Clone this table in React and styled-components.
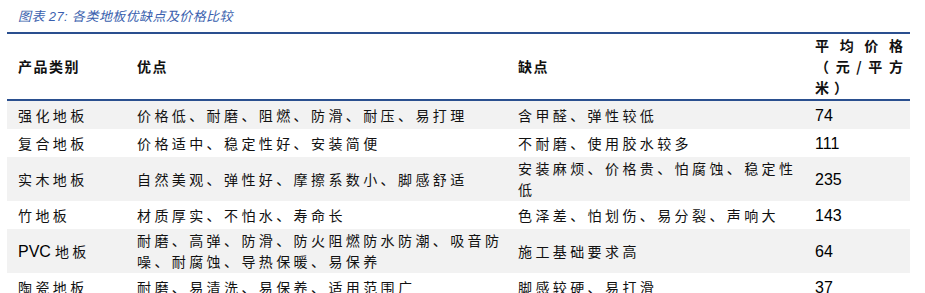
import React from "react"
import styled, { createGlobalStyle } from "styled-components"

const GlobalStyle = createGlobalStyle`
  body {
    margin: 0;
    background: #ffffff;
    font-family: "Noto Sans CJK SC", sans-serif;
    color: #111;
  }
`

const Page = styled.div`
  width: 925px;
  height: 293px;
  overflow: hidden;
  padding: 7px 15px 0 7px;
  box-sizing: border-box;
`

const Caption = styled.div`
  font-family: "Liberation Sans", "Noto Sans CJK SC", sans-serif;
  font-style: italic;
  font-size: 13px;
  letter-spacing: 0.4px;
  line-height: 20px;
  color: #3a5fae;
  padding-left: 11px;
  height: 25px;
`

const Table = styled.div`
  width: 903px;
  border-top: 2px solid #2a4f8f;
`

const Row = styled.div`
  display: grid;
  grid-template-columns: 121px 381px 297px 104px;
  align-items: center;
  min-height: ${p => (p.$head ? 64 : 28)}px;
  padding: 1px 0;
  box-sizing: border-box;
  background: ${p => (p.$shade ? "#f2f2f2" : "#ffffff")};
  border-bottom: ${p => (p.$head ? "2px solid #2a4f8f" : "none")};
`

const Cell = styled.div`
  padding-left: ${p => (p.$first ? 11 : 9)}px;
  font-size: 14px;
  letter-spacing: 3.4px;
  line-height: 21px;
`

const HeadCell = styled(Cell)`
  font-weight: 700;
  letter-spacing: 1.5px;
`

const Num = styled(Cell)`
  font-family: "Liberation Sans", sans-serif;
  font-size: 16px;
  letter-spacing: 0;
  color: #000;
`

const Latin = styled.span`
  font-family: "Liberation Sans", sans-serif;
  font-size: 16px;
  letter-spacing: 0;
  margin-right: 4px;
  color: #000;
`

const PriceHead = styled.div`
  width: 88px;
  font-weight: 700;
  font-size: 14px;
  line-height: 21px;
`

const JustLine = styled.div`
  text-align: justify;
  text-align-last: ${p => (p.$last ? "left" : "justify")};
  letter-spacing: ${p => (p.$last ? "5px" : "0")};
`

const rows = [
  ["强化地板", "价格低、耐磨、阻燃、防滑、耐压、易打理", "含甲醛、弹性较低", "74"],
  ["复合地板", "价格适中、稳定性好、安装简便", "不耐磨、使用胶水较多", "111"],
  ["实木地板", "自然美观、弹性好、摩擦系数小、脚感舒适", "安装麻烦、价格贵、怕腐蚀、稳定性低", "235"],
  ["竹地板", "材质厚实、不怕水、寿命长", "色泽差、怕划伤、易分裂、声响大", "143"],
  [
    <><Latin>PVC</Latin>地板</>,
    "耐磨、高弹、防滑、防火阻燃防水防潮、吸音防噪、耐腐蚀、导热保暖、易保养",
    "施工基础要求高",
    "64",
  ],
  ["陶瓷地板", "耐磨、易清洗、易保养、适用范围广", "脚感较硬、易打滑", "37"],
]

const App = () => {
  return (
    <Page>
      <GlobalStyle />
      <Caption>图表 27:  各类地板优缺点及价格比较</Caption>
      <Table>
        <Row $head>
          <HeadCell $first>产品类别</HeadCell>
          <HeadCell>优点</HeadCell>
          <HeadCell>缺点</HeadCell>
          <Cell>
            <PriceHead>
              <JustLine>平均价格</JustLine>
              <JustLine>（元/平方</JustLine>
              <JustLine $last>米）</JustLine>
            </PriceHead>
          </Cell>
        </Row>
        {rows.map((r, i) => (
          <Row key={i} $shade={i % 2 === 0}>
            <Cell $first>{r[0]}</Cell>
            <Cell>{r[1]}</Cell>
            <Cell>{r[2]}</Cell>
            <Num>{r[3]}</Num>
          </Row>
        ))}
      </Table>
    </Page>
  )
}

export default App
